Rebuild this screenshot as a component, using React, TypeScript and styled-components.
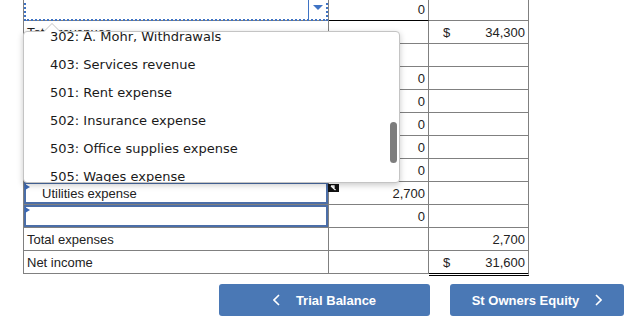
import React from "react";
import styled, { createGlobalStyle } from "styled-components";

const Global = createGlobalStyle`
  html, body { margin: 0; padding: 0; background: #fff; overflow: hidden; }
  body { font-family: "Liberation Sans", Arial, sans-serif; font-size: 13px; color: #222; }
`;

const Page = styled.div`
  width: 638px;
  height: 326px;
  overflow: hidden;
`;

const Sheet = styled.div`
  position: relative;
  margin: -2px 0 0 23px;
  width: 506px;
`;

const Grid = styled.div`
  display: grid;
  grid-template-columns: 306px 100px 100px;
  grid-auto-rows: 23px;
`;

type Line = "none" | "single" | "double";

const Cell = styled.div<{ $first?: boolean; $line?: Line }>`
  position: relative;
  box-sizing: border-box;
  display: flex;
  align-items: center;
  border-right: 1px solid #808080;
  border-left: ${(p) => (p.$first ? "1px solid #808080" : "none")};
  border-bottom: ${(p) =>
    p.$line === "single"
      ? "1px solid #000"
      : p.$line === "double"
      ? "3px double #000"
      : "1px solid #808080"};
  height: ${(p) => (p.$line === "double" ? "25px" : "23px")};
  align-self: start;
`;

const Label = styled.span`
  padding-left: 3px;
  white-space: nowrap;
`;

const Number = styled.span`
  margin-left: auto;
  padding-right: 3px;
`;

const Dollar = styled.span`
  padding-left: 14px;
`;

const FocusSelect = styled.div`
  position: relative;
  box-sizing: border-box;
  align-self: stretch;
  width: calc(100% + 1px);
  height: calc(100% + 1px);
  border: 2px dotted #3f73c4;
  display: flex;
  justify-content: flex-end;
`;

const ArrowZone = styled.div`
  width: 18px;
  border-left: 1px solid #3f73c4;
  display: flex;
  justify-content: center;
  padding-top: 5px;
  box-sizing: border-box;
`;

const ArrowDown = styled.div`
  width: 0;
  height: 0;
  border-left: 5px solid transparent;
  border-right: 5px solid transparent;
  border-top: 5px solid #3f73c4;
`;

const SelectBox = styled.div`
  position: relative;
  box-sizing: border-box;
  align-self: stretch;
  flex: 1;
  border: 2px solid #4b6ea8;
  display: flex;
  align-items: center;
  padding-left: 16px;
  white-space: nowrap;
`;

const Marker = styled.span`
  position: absolute;
  left: -1px;
  top: 0;
  width: 0;
  height: 0;
  border-top: 3px solid transparent;
  border-bottom: 3px solid transparent;
  border-left: 5px solid #3a67b3;
`;

const Badge = styled.svg`
  position: absolute;
  left: -1px;
  top: 2px;
`;

const Popup = styled.div`
  position: absolute;
  left: 0;
  top: 33px;
  width: 377px;
  height: 152px;
  box-sizing: border-box;
  background: #fff;
  border: 1px solid #c4c4c4;
  border-radius: 4px;
  box-shadow: 0 2px 6px rgba(0, 0, 0, 0.22);
  z-index: 5;

  &::before {
    content: "";
    position: absolute;
    left: 19px;
    top: -9px;
    border-left: 9px solid transparent;
    border-right: 9px solid transparent;
    border-bottom: 9px solid #c4c4c4;
  }
  &::after {
    content: "";
    position: absolute;
    left: 20px;
    top: -8px;
    border-left: 8px solid transparent;
    border-right: 8px solid transparent;
    border-bottom: 8px solid #fff;
  }
`;

const ListViewport = styled.div`
  height: 100%;
  overflow: hidden;
  border-radius: 4px;
`;

const List = styled.ul`
  list-style: none;
  margin: -9px 0 0 0;
  padding: 0;
`;

const Option = styled.li`
  height: 28px;
  line-height: 28px;
  padding-left: 26px;
  font-family: "DejaVu Sans", Verdana, sans-serif;
  font-size: 13px;
  color: #1a1a1a;
  white-space: nowrap;
`;

const Thumb = styled.div`
  position: absolute;
  right: 2px;
  top: 90px;
  width: 7px;
  height: 41px;
  border-radius: 4px;
  background: #7d7d7d;
`;

const Nav = styled.div`
  display: flex;
  justify-content: flex-end;
  gap: 20px;
  padding-right: 14px;
  margin-top: 10px;
`;

const NavButton = styled.button<{ $w: number }>`
  width: ${(p) => p.$w}px;
  height: 32px;
  border: none;
  border-radius: 3px;
  background: #4a78b5;
  color: #fff;
  font-family: "Liberation Sans", Arial, sans-serif;
  font-weight: bold;
  font-size: 13px;
  display: flex;
  align-items: center;
  justify-content: center;
  gap: 16px;
  padding: 0;
`;

const Chevron = ({ dir }: { dir: "left" | "right" }) => (
  <svg width="7" height="12" viewBox="0 0 7 12">
    <path
      d={dir === "left" ? "M6 1 L1 6 L6 11" : "M1 1 L6 6 L1 11"}
      fill="none"
      stroke="#fff"
      strokeWidth="1.6"
    />
  </svg>
);

const options = [
  "302: A. Mohr, Withdrawals",
  "403: Services revenue",
  "501: Rent expense",
  "502: Insurance expense",
  "503: Office supplies expense",
  "505: Wages expense",
];

const Empty = () => (
  <>
    <Cell $first />
    <Cell />
    <Cell />
  </>
);

const ZeroRow = () => (
  <>
    <Cell $first />
    <Cell>
      <Number>0</Number>
    </Cell>
    <Cell />
  </>
);

export default function App() {
  return (
    <Page>
      <Global />
      <Sheet>
        <Grid>
          {/* row 0 */}
          <Cell $first>
            <FocusSelect>
              <ArrowZone>
                <ArrowDown />
              </ArrowZone>
            </FocusSelect>
          </Cell>
          <Cell $line="single">
            <Number>0</Number>
          </Cell>
          <Cell />
          {/* row 1 */}
          <Cell $first>
            <Label>Total revenues</Label>
          </Cell>
          <Cell />
          <Cell>
            <Dollar>$</Dollar>
            <Number>34,300</Number>
          </Cell>
          {/* row 2 */}
          <Empty />
          <ZeroRow />
          <ZeroRow />
          <ZeroRow />
          <ZeroRow />
          <ZeroRow />
          {/* row 8 */}
          <Cell $first>
            <SelectBox>
              <Marker />
              Utilities expense
            </SelectBox>
          </Cell>
          <Cell>
            <Badge width="11" height="8" viewBox="0 0 11 8">
              <rect width="11" height="8" fill="#111" />
              <path d="M3 2 L6 2 L6 5 M3 2 L7.5 6" stroke="#fff" strokeWidth="1.3" fill="none" />
            </Badge>
            <Number>2,700</Number>
          </Cell>
          <Cell />
          {/* row 9 */}
          <Cell $first>
            <SelectBox>
              <Marker />
            </SelectBox>
          </Cell>
          <Cell>
            <Number>0</Number>
          </Cell>
          <Cell />
          {/* row 10 */}
          <Cell $first>
            <Label>Total expenses</Label>
          </Cell>
          <Cell />
          <Cell>
            <Number>2,700</Number>
          </Cell>
          {/* row 11 */}
          <Cell $first>
            <Label>Net income</Label>
          </Cell>
          <Cell />
          <Cell $line="double">
            <Dollar>$</Dollar>
            <Number>31,600</Number>
          </Cell>
        </Grid>
        <Popup>
          <ListViewport>
            <List>
              {options.map((o) => (
                <Option key={o}>{o}</Option>
              ))}
            </List>
          </ListViewport>
          <Thumb />
        </Popup>
      </Sheet>
      <Nav>
        <NavButton $w={211}>
          <Chevron dir="left" />
          Trial Balance
        </NavButton>
        <NavButton $w={174}>
          St Owners Equity
          <Chevron dir="right" />
        </NavButton>
      </Nav>
    </Page>
  );
}
